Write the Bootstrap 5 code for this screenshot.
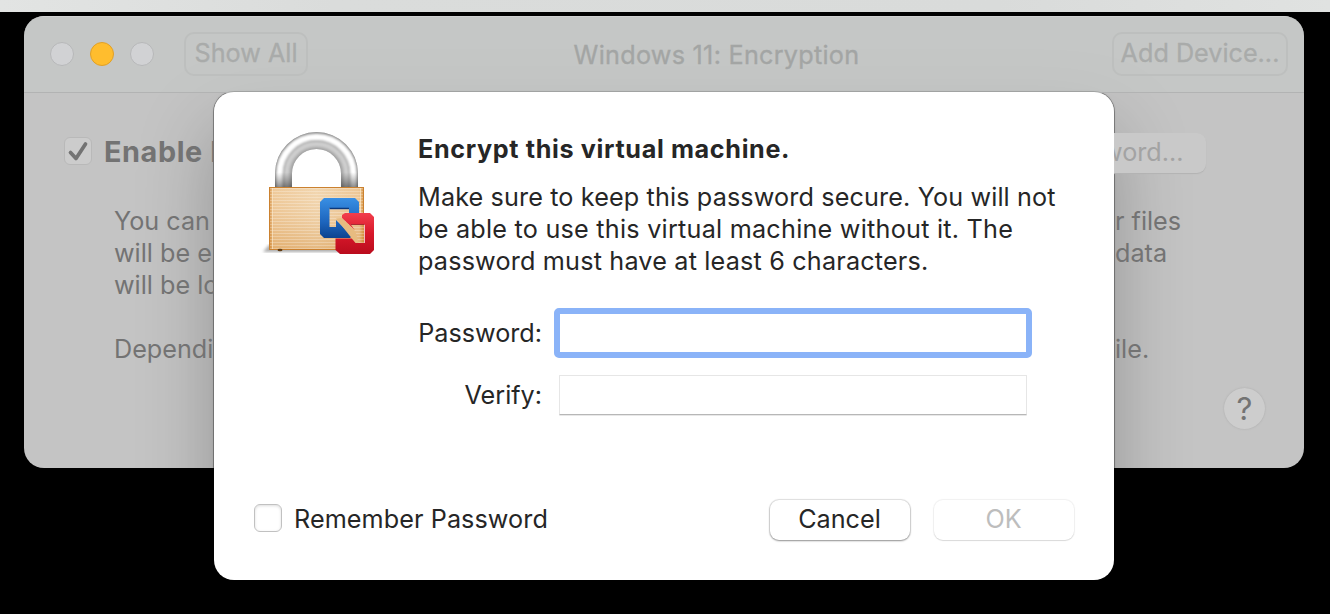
<!DOCTYPE html>
<html lang="en">
<head>
<meta charset="utf-8">
<meta name="viewport" content="width=device-width, initial-scale=1">
<title>Windows 11: Encryption</title>
<link href="https://cdn.jsdelivr.net/npm/bootstrap@5.3.0/dist/css/bootstrap.min.css" rel="stylesheet">
<style>
body{background:#000;font-family:Inter,"Liberation Sans",sans-serif;font-size:25.2px;line-height:32px;color:#262626;height:614px;overflow:hidden}
.topstrip{height:12px;background:linear-gradient(90deg,#e2e4e3,#dadcdb 25%,#d9dbda 75%,#e0e2e1)}
.stage{height:602px;padding:4px 26px 0 24px}
.win{height:452px;border-radius:20px;background:#c4c4c4;overflow:hidden;color:#737373}
.titlebar{height:77px;background:rgba(197,202,199,.5);border-bottom:1px solid #b2b3b3;box-shadow:inset 0 1px 0 #d0d1d1;padding:0 16px 0 26px}
.dot{width:24px;height:24px;border-radius:50%;background:#d1d2d4;border:1px solid #b7b8b9}
.dot.amber{background:#ffbd2e;border-color:#e0a028}
.tbtn{height:44px;border:2px solid #bdbfbe;border-radius:10px;color:#a9abaa;line-height:38px;text-align:center;-webkit-text-stroke:.3px}
.tbtn.all{width:124px;margin-left:30px}
.tbtn.add{width:176px}
.win-title{color:#a3a5a4;letter-spacing:.27px;padding:2px 0 0 13px;-webkit-text-stroke:.3px}
.content-area{padding:40px 0 0 40px}
.option-row{height:40px;padding-right:98px}
.option-label{font-size:28.8px;letter-spacing:.6px;margin:-2px 0 0 12px}
.chk{width:28px;height:28px;border-radius:6px;flex:none}
.chk.on{background:#cccccc;border:1px solid #b9b9b9;margin-top:-4px}
.passbtn{height:40px;width:120px;background:#c9c9c9;border-radius:9px;color:#a3a3a3;box-shadow:0 1px 1px #b3b3b3;line-height:38px;padding-left:16px}
.details{padding:32px 122px 0 50px}
.details-right{width:67px}
.help{width:41px;height:41px;border-radius:50%;background:#cdcdcd;box-shadow:0 0 2px #a8a8a8;font-size:31px}
.sheet{position:absolute;left:214px;top:92px;width:900px;height:488px;border-radius:20px;background:#fff;padding:41px 40px 0 40px}
/* shadow is cast on the window only */
.shade{position:absolute;left:190px;top:76px;width:900px;height:488px;border-radius:20px;box-shadow:0 0 0 1px rgba(0,0,0,.3),0 0 3px rgba(0,0,0,.15),0 36px 76px rgba(0,0,0,.25)}
.lock-icon{position:absolute;left:46px;top:36px}
.msg,.frow{padding-left:164px}
.heading{letter-spacing:.64px}
.l1{letter-spacing:.13px}
.l2{letter-spacing:.24px}
.l3{letter-spacing:.18px}
.flabel{width:124px;text-align:right}
.field{width:468px;height:40px;border:1px solid #e6e6e6;border-bottom:1px solid #b7b7b7;border-radius:1px;padding:0;margin-left:17px;box-shadow:0 1px 0 #e8e8e8;background:#fff}
.field.active{width:478px;height:50px;border:6px solid #8ab3f8;border-radius:5px;margin-left:12px;box-shadow:none;outline:0;background:linear-gradient(#fff 0 0) padding-box}
.footrow{margin-top:85px;height:40px}
.chk.off{border:1px solid #c1c1c1;box-shadow:inset 0 1px 3px #ddd;background:#fff;margin-top:-4px}
.remember{margin:-2px 0 0 12px;white-space:nowrap;letter-spacing:.08px}
.pbtn{width:140px;height:40px;border-radius:9px;background:#fff;text-align:center;line-height:38px;box-shadow:0 0 1px 1px rgba(0,0,0,.12),0 1px 2px rgba(0,0,0,.35);border:0;color:#262626;padding:0 1px 2px 0}
.pbtn.dim{color:#bdbdbd;box-shadow:0 0 1px 1px rgba(0,0,0,.06),0 1px 1px rgba(0,0,0,.1);margin-left:24px}
.ln{display:block;white-space:nowrap}
</style>
</head>
<body>
<div class="topstrip"></div>
<main class="stage">
  <section class="win position-relative">
    <div class="shade"></div>
    <header class="titlebar d-flex align-items-center position-relative">
      <div class="d-flex gap-3"><span class="dot"></span><span class="dot amber"></span><span class="dot"></span></div>
      <div class="tbtn all">Show All</div>
      <div class="flex-grow-1 text-center win-title">Windows 11: Encryption</div>
      <div class="tbtn add">Add Device...</div>
    </header>
    <div class="content-area position-relative">
      <div class="option-row d-flex justify-content-between align-items-center">
        <div class="d-flex align-items-center"><span class="chk on d-flex"><svg width="26" height="26" viewBox="0 0 26 26"><path d="M5.500 14.500 11 20.500 20.500 6" fill="none" stroke="#737373" stroke-width="3.7" stroke-linecap="round" stroke-linejoin="round"/></svg></span>
        <b class="ln option-label">Enable E</b></div>
        <div class="passbtn">word...</div>
      </div>
      <div class="details d-flex justify-content-between">
        <div><span class="ln">You can</span><span class="ln">will be e</span><span class="ln">will be lo</span><br><span class="ln">Dependi</span></div>
        <div class="details-right"><span class="ln">r files</span><span class="ln">data</span><br><br><span class="ln">ile.</span></div>
      </div>
      <div class="d-flex justify-content-end" style="padding:23px 39px 0 0"><span class="help d-flex align-items-center justify-content-center">?</span></div>
    </div>
  </section>
</main>
<section class="sheet">
  <svg class="lock-icon" width="120" height="132" viewBox="260 128 120 132" aria-label="Encryption lock">
    <defs>
      <linearGradient id="leg" x1="0" y1="0" x2="0" y2="1"><stop offset="0" stop-color="#333" stop-opacity="0"/><stop offset=".72" stop-color="#333" stop-opacity="0"/><stop offset="1" stop-color="#222" stop-opacity=".55"/></linearGradient>
      <linearGradient id="wood" x1="0" y1="0" x2="1" y2="0"><stop offset="0" stop-color="#d48a36"/><stop offset=".05" stop-color="#edc48f"/><stop offset=".5" stop-color="#f0d1a6"/><stop offset=".95" stop-color="#ebc089"/><stop offset="1" stop-color="#d08427"/></linearGradient>
      <linearGradient id="dk" x1="0" y1="0" x2="0" y2="1"><stop offset="0" stop-color="#fff" stop-opacity=".1"/><stop offset="1" stop-color="#d08a38" stop-opacity=".36"/></linearGradient>
      <linearGradient id="bl" gradientUnits="userSpaceOnUse" x1="0" y1="198" x2="0" y2="238"><stop offset="0" stop-color="#398fe4"/><stop offset=".6" stop-color="#1d65bd"/><stop offset="1" stop-color="#0c438f"/></linearGradient>
      <linearGradient id="rd" gradientUnits="userSpaceOnUse" x1="0" y1="213" x2="0" y2="254"><stop offset="0" stop-color="#f23e4c"/><stop offset=".5" stop-color="#d7182a"/><stop offset="1" stop-color="#ba0c1d"/></linearGradient>
      <pattern id="grain" x="0" y="187" width="8" height="3" patternUnits="userSpaceOnUse"><path d="M0 1.500H8" stroke="#fff" stroke-opacity=".25"/></pattern>
      <filter id="soft"><feGaussianBlur stdDeviation="1.4"/></filter>
      <filter id="sheen" x="-10%" y="-10%" width="120%" height="120%"><feGaussianBlur stdDeviation=".9"/></filter>
      <clipPath id="shackle"><path d="M275 188v-14.500a41.500 41.500 0 0 1 83 0v14.500h-17v-14.500a24.500 24.500 0 0 0-49 0v14.500z"/></clipPath>
    </defs>
    <path d="M263 252l6-7h94v7z" fill="#777" opacity=".6" filter="url(#soft)"/>
    <g clip-path="url(#shackle)">
      <path d="M270 130h93v60h-93z" fill="#bcbcbc"/>
      <g fill="none" filter="url(#sheen)">
        <path d="M275 195v-21a41.500 41.500 0 0 1 83 0v21" stroke="#858585" stroke-width="2.500"/>
        <path d="M279.500 195v-21a37 37 0 0 1 74 0v21" stroke="#fff" stroke-width="6"/>
        <path d="M283.500 195v-21a33 33 0 0 1 66 0v21" stroke="#a8a8a8" stroke-width="1.300"/>
        <path d="M286.500 195v-21a30 30 0 0 1 60 0v21" stroke="#cfcfcf" stroke-width="4"/>
        <path d="M292 195v-21a24.500 24.500 0 0 1 49 0v21" stroke="#a4a4a4" stroke-width="4"/>
      </g>
      <path d="M270 132h93v56h-93z" fill="url(#leg)"/>
    </g>
    <path d="M269 187h95v63h-95z" fill="url(#wood)"/><path d="M269 187h95v63h-95z" fill="url(#dk)"/><path d="M269 187h95v63h-95z" fill="url(#grain)"/>
    <path d="M269.500 187v63M363.500 187v34M269 187.500h95M269 249.500h70" stroke="#cb812f" stroke-width="1" fill="none"/><path d="M272.500 188v61M360.500 188v32" stroke="#fff1d7" stroke-opacity=".6"/>
    <ellipse cx="280" cy="250" rx="2.500" ry="1.200" fill="#623c13"/>
    <path fill="url(#bl)" d="M324 198h31l4 4v12h-10v-6h-19.500v19h6.500v-7l16 16-2 2h-26l-4-4v-32z"/>
    <path d="M329.500 208.500h19.500" stroke="#0b377a" stroke-width="1.500"/>
    <path fill="url(#rd)" d="M345 213h25l4 4v33l-4 4h-30l-4.500-4v-11.500h16.500l4.500 4.500h8.200v-18.500h-14l4 5.500-12.700-12v-3z"/>
    <path d="M336 218.500l5.500-.5 14 13.500 3 11.500h-3z" fill="#e7bb80"/>
    <path d="M351 224.500h13.500" stroke="#8f0d19" stroke-width="1" opacity=".7"/>
  </svg>
  <div class="msg">
    <b class="ln heading">Encrypt this virtual machine.</b>
    <div class="pt-3"><span class="ln l1">Make sure to keep this password secure. You will not</span><span class="ln l2">be able to use this virtual machine without it. The</span><span class="ln l3">password must have at least 6 characters.</span></div>
  </div>
  <div class="frow d-flex align-items-center" style="margin-top:31px"><label class="flabel" for="pw">Password:</label><input id="pw" type="password" class="field active"></div>
  <div class="frow d-flex align-items-center" style="margin-top:17px"><label class="flabel" for="vf">Verify:</label><input id="vf" type="password" class="field"></div>
  <footer class="footrow d-flex align-items-center">
    <span class="chk off"></span><span class="remember">Remember Password</span>
    <button class="pbtn ms-auto">Cancel</button><button class="pbtn dim" disabled>OK</button>
  </footer>
</section>
<script src="https://cdn.jsdelivr.net/npm/bootstrap@5.3.0/dist/js/bootstrap.bundle.min.js"></script>
</body>
</html>
